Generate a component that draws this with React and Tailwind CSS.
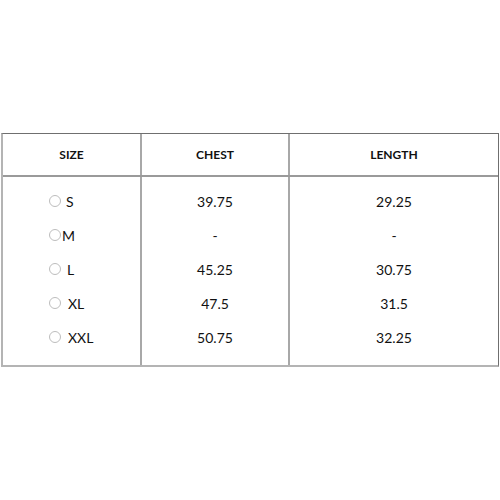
const rows = [
  { size: 'S', gap: 'gap-[5px]', chest: '39.75', length: '29.25' },
  { size: 'M', gap: 'gap-[1px]', chest: '-', length: '-' },
  { size: 'L', gap: 'gap-[6px]', chest: '45.25', length: '30.75' },
  { size: 'XL', gap: 'gap-[7px]', chest: '47.5', length: '31.5' },
  { size: 'XXL', gap: 'gap-[7px]', chest: '50.75', length: '32.25' },
];

function Radio() {
  return <span className="inline-block w-[12px] h-[12px] rounded-full border border-[#bdbdbd] bg-white" />;
}

export default function App() {
  return (
    <div className="w-[500px] h-[500px] bg-white pt-[133px] px-[1px]" style={{ fontFamily: 'Lato, "Open Sans", sans-serif' }}>
      <div className="w-[498px] border-t border-r border-t-[#6f6f6f] border-r-[#6f6f6f] border-l-2 border-b-2 border-l-[#b4b4b4] border-b-[#b4b4b4] text-[#111]">
        <div className="grid grid-cols-[139px_148px_1fr] h-[43px] border-b-2 border-[#9a9a9a] text-[12px] font-bold">
          <div className="flex items-center justify-center border-r-2 border-[#a8a8a8]">SIZE</div>
          <div className="flex items-center justify-center border-r-2 border-[#a8a8a8]">CHEST</div>
          <div className="flex items-center justify-center">LENGTH</div>
        </div>
        <div className="grid grid-cols-[139px_148px_1fr] text-[14px]">
          <div className="flex flex-col pt-[7px] pb-[11px] pl-[46px] border-r-2 border-[#a8a8a8]">
            {rows.map((r) => (
              <div key={r.size} className={`flex items-center h-[34px] ${r.gap}`}>
                <Radio />
                <span>{r.size}</span>
              </div>
            ))}
          </div>
          <div className="flex flex-col pt-[7px] pb-[11px] border-r-2 border-[#a8a8a8]">
            {rows.map((r) => (
              <div key={r.size} className="flex items-center justify-center h-[34px]">{r.chest}</div>
            ))}
          </div>
          <div className="flex flex-col pt-[7px] pb-[11px]">
            {rows.map((r) => (
              <div key={r.size} className="flex items-center justify-center h-[34px]">{r.length}</div>
            ))}
          </div>
        </div>
      </div>
    </div>
  );
}
